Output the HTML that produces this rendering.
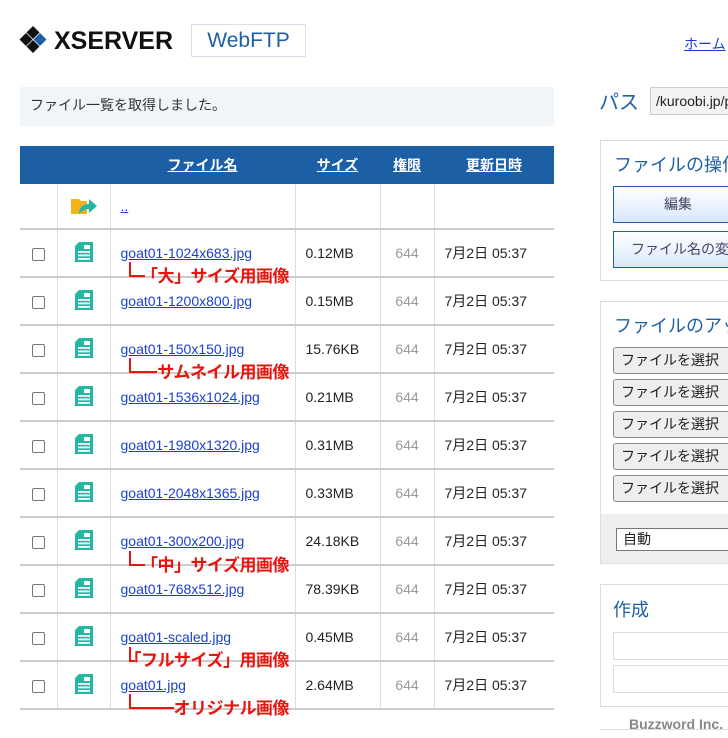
<!DOCTYPE html>
<html><head><meta charset="utf-8"><style>
*{margin:0;padding:0;box-sizing:border-box}
html,body{width:728px;height:738px;overflow:hidden}
body{background:#fff;font-family:"Liberation Sans","Noto Sans CJK JP",sans-serif;position:relative;color:#222}
.a{position:absolute}
.logo{left:54px;top:27px;font-size:25px;font-weight:bold;color:#111;letter-spacing:0px}
.wf{left:191px;top:24px;width:115px;height:33px;border:1px solid #d6e0ea;color:#1e5fa6;font-size:21px;text-align:center;line-height:31px}
.msg{left:20px;top:87px;width:534px;height:39px;background:#f2f5f8;font-size:14px;line-height:37px;padding-left:10px;color:#333}
table{position:absolute;left:20px;top:146px;border-collapse:collapse;width:534px;font-size:14px}
th{background:#1c5fa5;color:#fff;height:38px;font-size:14px;text-decoration:underline}
td{border:1px solid #ddd;border-top:2px solid #ccc;height:48px;vertical-align:middle}
tr.p td{height:45px;border-top:none}
td:first-child{border-left:none}td:last-child{border-right:none}
td.c{text-align:center}
td.l a{color:#1a3fcf;text-decoration:underline;padding-left:10px}
td.s{padding-left:10px}
td.m{text-align:center;color:#999}
td.d{padding-left:10px}
.cb{display:inline-block;width:13px;height:13px;border:1px solid #777;border-radius:2px;vertical-align:middle}
.ann{position:absolute;right:439px;color:#e8150f;font-weight:bold;font-size:17px;line-height:20px;white-space:nowrap;letter-spacing:-0.5px}
.v{position:absolute;background:#e8150f;width:2px}
.h{position:absolute;background:#e8150f;height:2px}
.bx{border:1px solid #ddd;left:600px;width:140px}
.btn{position:absolute;left:613px;width:130px;height:37px;border:1px solid #1c5fa5;background:linear-gradient(#fff,#d8e9fb);color:#446;font-size:14px;text-align:center;line-height:35px}
.fs{position:absolute;left:613px;width:120px;height:27px;border:1px solid #888;border-radius:3px;background:#eee;font-size:14px;line-height:25px;padding-left:7px}
</style></head><body>
<svg class="a" style="left:19px;top:25px" width="32" height="30" viewBox="0 0 32 30"><path d="M14 1l6.5 6.5-6.5 6.5-6.5-6.5z" fill="#111"/><path d="M7 8l6.5 6.5L7 21 .5 14.5z" fill="#111"/><path d="M21 8l6.5 6.5L21 21l-6.5-6.5z" fill="#1c5fa5"/><path d="M14 15l6.5 6.5L14 28l-6.5-6.5z" fill="#111"/></svg>
<div class="a logo">XSERVER</div>
<div class="a wf">WebFTP</div>
<a class="a" style="left:684px;top:34px;font-size:14px;color:#1a3fcf;text-decoration:underline">ホーム</a>
<div class="a msg">ファイル一覧を取得しました。</div>
<table>
<tr><th style="width:37px"></th><th style="width:53px"></th><th style="width:185px">ファイル名</th><th style="width:85px">サイズ</th><th style="width:54px">権限</th><th>更新日時</th></tr>
<tr class="p"><td></td><td class="c"><svg width="28" height="22" viewBox="0 0 28 22"><path d="M1 5h8l2 2h6v13H1z" fill="#f6b21b"/><path d="M9 20c0-7 4-10 10-10V5l8 7-8 7v-4c-4 0-7 2-10 5z" fill="#25b7a5"/></svg></td><td class="l"><a>..</a></td><td></td><td></td><td></td></tr>
<tr><td class="c"><span class="cb"></span></td><td class="c"><svg width="20" height="22" viewBox="0 0 20 22"><path d="M5 1h14v20H1V5z" fill="#25b7a5"/><rect x="10" y="4" width="6" height="4" fill="#fff"/><rect x="4" y="10" width="12" height="1.8" fill="#fff"/><rect x="4" y="13.5" width="12" height="1.8" fill="#fff"/><rect x="4" y="17" width="12" height="1.8" fill="#fff"/></svg></td><td class="l"><a>goat01-1024x683.jpg</a></td><td class="s">0.12MB</td><td class="m">644</td><td class="d">7月2日 05:37</td></tr>
<tr><td class="c"><span class="cb"></span></td><td class="c"><svg width="20" height="22" viewBox="0 0 20 22"><path d="M5 1h14v20H1V5z" fill="#25b7a5"/><rect x="10" y="4" width="6" height="4" fill="#fff"/><rect x="4" y="10" width="12" height="1.8" fill="#fff"/><rect x="4" y="13.5" width="12" height="1.8" fill="#fff"/><rect x="4" y="17" width="12" height="1.8" fill="#fff"/></svg></td><td class="l"><a>goat01-1200x800.jpg</a></td><td class="s">0.15MB</td><td class="m">644</td><td class="d">7月2日 05:37</td></tr>
<tr><td class="c"><span class="cb"></span></td><td class="c"><svg width="20" height="22" viewBox="0 0 20 22"><path d="M5 1h14v20H1V5z" fill="#25b7a5"/><rect x="10" y="4" width="6" height="4" fill="#fff"/><rect x="4" y="10" width="12" height="1.8" fill="#fff"/><rect x="4" y="13.5" width="12" height="1.8" fill="#fff"/><rect x="4" y="17" width="12" height="1.8" fill="#fff"/></svg></td><td class="l"><a>goat01-150x150.jpg</a></td><td class="s">15.76KB</td><td class="m">644</td><td class="d">7月2日 05:37</td></tr>
<tr><td class="c"><span class="cb"></span></td><td class="c"><svg width="20" height="22" viewBox="0 0 20 22"><path d="M5 1h14v20H1V5z" fill="#25b7a5"/><rect x="10" y="4" width="6" height="4" fill="#fff"/><rect x="4" y="10" width="12" height="1.8" fill="#fff"/><rect x="4" y="13.5" width="12" height="1.8" fill="#fff"/><rect x="4" y="17" width="12" height="1.8" fill="#fff"/></svg></td><td class="l"><a>goat01-1536x1024.jpg</a></td><td class="s">0.21MB</td><td class="m">644</td><td class="d">7月2日 05:37</td></tr>
<tr><td class="c"><span class="cb"></span></td><td class="c"><svg width="20" height="22" viewBox="0 0 20 22"><path d="M5 1h14v20H1V5z" fill="#25b7a5"/><rect x="10" y="4" width="6" height="4" fill="#fff"/><rect x="4" y="10" width="12" height="1.8" fill="#fff"/><rect x="4" y="13.5" width="12" height="1.8" fill="#fff"/><rect x="4" y="17" width="12" height="1.8" fill="#fff"/></svg></td><td class="l"><a>goat01-1980x1320.jpg</a></td><td class="s">0.31MB</td><td class="m">644</td><td class="d">7月2日 05:37</td></tr>
<tr><td class="c"><span class="cb"></span></td><td class="c"><svg width="20" height="22" viewBox="0 0 20 22"><path d="M5 1h14v20H1V5z" fill="#25b7a5"/><rect x="10" y="4" width="6" height="4" fill="#fff"/><rect x="4" y="10" width="12" height="1.8" fill="#fff"/><rect x="4" y="13.5" width="12" height="1.8" fill="#fff"/><rect x="4" y="17" width="12" height="1.8" fill="#fff"/></svg></td><td class="l"><a>goat01-2048x1365.jpg</a></td><td class="s">0.33MB</td><td class="m">644</td><td class="d">7月2日 05:37</td></tr>
<tr><td class="c"><span class="cb"></span></td><td class="c"><svg width="20" height="22" viewBox="0 0 20 22"><path d="M5 1h14v20H1V5z" fill="#25b7a5"/><rect x="10" y="4" width="6" height="4" fill="#fff"/><rect x="4" y="10" width="12" height="1.8" fill="#fff"/><rect x="4" y="13.5" width="12" height="1.8" fill="#fff"/><rect x="4" y="17" width="12" height="1.8" fill="#fff"/></svg></td><td class="l"><a>goat01-300x200.jpg</a></td><td class="s">24.18KB</td><td class="m">644</td><td class="d">7月2日 05:37</td></tr>
<tr><td class="c"><span class="cb"></span></td><td class="c"><svg width="20" height="22" viewBox="0 0 20 22"><path d="M5 1h14v20H1V5z" fill="#25b7a5"/><rect x="10" y="4" width="6" height="4" fill="#fff"/><rect x="4" y="10" width="12" height="1.8" fill="#fff"/><rect x="4" y="13.5" width="12" height="1.8" fill="#fff"/><rect x="4" y="17" width="12" height="1.8" fill="#fff"/></svg></td><td class="l"><a>goat01-768x512.jpg</a></td><td class="s">78.39KB</td><td class="m">644</td><td class="d">7月2日 05:37</td></tr>
<tr><td class="c"><span class="cb"></span></td><td class="c"><svg width="20" height="22" viewBox="0 0 20 22"><path d="M5 1h14v20H1V5z" fill="#25b7a5"/><rect x="10" y="4" width="6" height="4" fill="#fff"/><rect x="4" y="10" width="12" height="1.8" fill="#fff"/><rect x="4" y="13.5" width="12" height="1.8" fill="#fff"/><rect x="4" y="17" width="12" height="1.8" fill="#fff"/></svg></td><td class="l"><a>goat01-scaled.jpg</a></td><td class="s">0.45MB</td><td class="m">644</td><td class="d">7月2日 05:37</td></tr>
<tr><td class="c" style="border-bottom:2px solid #ccc"><span class="cb"></span></td><td class="c" style="border-bottom:2px solid #ccc"><svg width="20" height="22" viewBox="0 0 20 22"><path d="M5 1h14v20H1V5z" fill="#25b7a5"/><rect x="10" y="4" width="6" height="4" fill="#fff"/><rect x="4" y="10" width="12" height="1.8" fill="#fff"/><rect x="4" y="13.5" width="12" height="1.8" fill="#fff"/><rect x="4" y="17" width="12" height="1.8" fill="#fff"/></svg></td><td class="l" style="border-bottom:2px solid #ccc"><a>goat01.jpg</a></td><td class="s" style="border-bottom:2px solid #ccc">2.64MB</td><td class="m" style="border-bottom:2px solid #ccc">644</td><td class="d" style="border-bottom:2px solid #ccc">7月2日 05:37</td></tr>
</table>

<div class="v" style="left:129px;top:262px;height:15px"></div><div class="h" style="left:129px;top:275px;width:16px"></div><div class="ann" style="top:267px">「大」サイズ用画像</div>
<div class="v" style="left:129px;top:358px;height:15px"></div><div class="h" style="left:129px;top:371px;width:28px"></div><div class="ann" style="top:363px">サムネイル用画像</div>
<div class="v" style="left:129px;top:551px;height:15px"></div><div class="h" style="left:129px;top:564px;width:16px"></div><div class="ann" style="top:556px">「中」サイズ用画像</div>
<div class="v" style="left:129px;top:647px;height:15px"></div><div class="h" style="left:129px;top:660px;width:6px"></div><div class="ann" style="top:651px">「フルサイズ」用画像</div>
<div class="v" style="left:129px;top:694px;height:15px"></div><div class="h" style="left:129px;top:707px;width:45px"></div><div class="ann" style="top:699px">オリジナル画像</div>

<div class="a" style="left:599px;top:86px;font-size:20px;color:#1e5fa6">パス</div>
<div class="a" style="left:650px;top:87px;width:78px;height:28px;border:1px solid #ccc;border-right:none;background:#f3f3f3;font-size:14px;line-height:26px;padding-left:5px;overflow:hidden;white-space:nowrap">/kuroobi.jp/public_html</div>
<div class="a bx" style="top:140px;height:141px"></div>
<div class="a" style="left:614px;top:151px;width:114px;overflow:hidden;font-size:18px;color:#1e5fa6;white-space:nowrap">ファイルの操作</div>
<div class="btn" style="top:186px">編集</div>
<div class="btn" style="top:231px;text-align:left;padding-left:17px;white-space:nowrap;overflow:hidden">ファイル名の変更</div>
<div class="a bx" style="top:301px;height:263px"></div>
<div class="a" style="left:601px;top:514px;width:140px;height:49px;background:#eee"></div>
<div class="a" style="left:614px;top:312px;width:114px;overflow:hidden;font-size:18px;color:#1e5fa6;white-space:nowrap">ファイルのアップロード</div>
<div class="fs" style="top:347px">ファイルを選択</div>
<div class="fs" style="top:379px">ファイルを選択</div>
<div class="fs" style="top:411px">ファイルを選択</div>
<div class="fs" style="top:443px">ファイルを選択</div>
<div class="fs" style="top:475px">ファイルを選択</div>
<div class="a" style="left:616px;top:528px;width:120px;height:23px;border:1px solid #777;background:#fff;font-size:14px;line-height:21px;padding-left:6px">自動</div>
<div class="a bx" style="top:584px;height:123px"></div>
<div class="a" style="left:613px;top:596px;font-size:18px;color:#1e5fa6">作成</div>
<div class="a" style="left:613px;top:632px;width:120px;height:28px;border:1px solid #ddd"></div>
<div class="a" style="left:613px;top:665px;width:120px;height:28px;border:1px solid #ddd"></div>
<div class="a" style="left:629px;top:716px;font-size:14px;font-weight:bold;color:#888">Buzzword Inc.</div>
<div class="a" style="left:600px;top:729px;width:128px;height:1px;background:#ddd"></div>
</body></html>
